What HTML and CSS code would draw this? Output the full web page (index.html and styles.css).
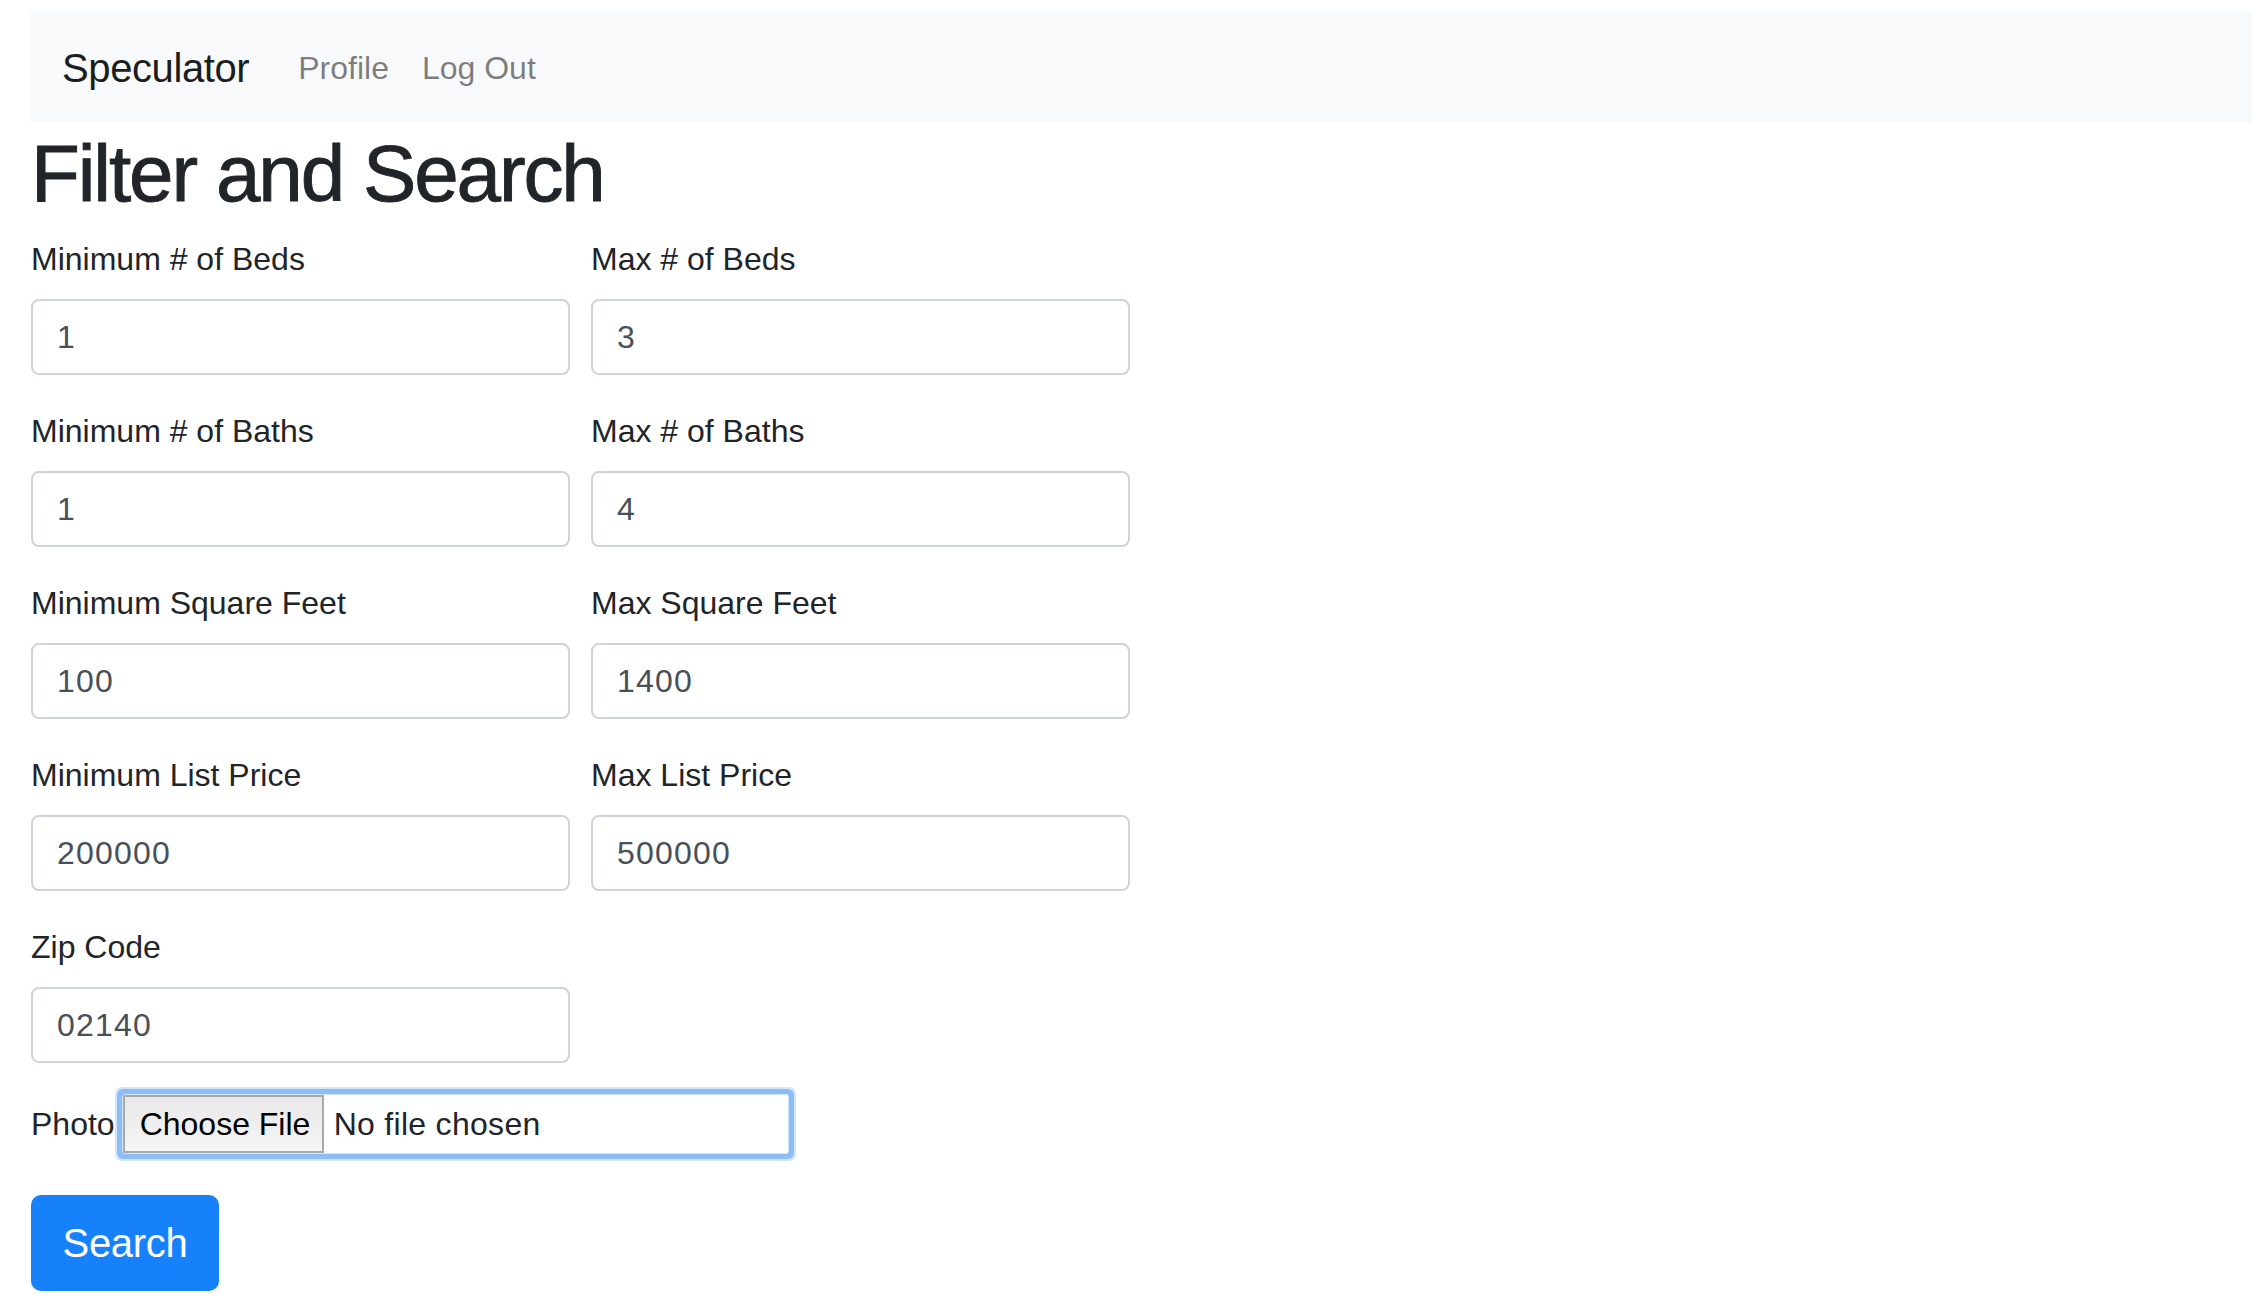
FILE: index.html
```html
<!DOCTYPE html>
<html lang="en">
<head>
<meta charset="utf-8">
<title>Speculator - Filter and Search</title>
<link rel="stylesheet" href="styles.css">
</head>
<body>
<div class="page">
  <nav class="navbar">
    <a class="brand" href="#">Speculator</a>
    <a class="nav-link" href="#">Profile</a>
    <a class="nav-link" href="#">Log Out</a>
  </nav>
  <h1 class="title">Filter and Search</h1>
  <form class="search-form">
    <div class="form-grid">
      <div class="field"><label>Minimum # of Beds</label><input class="input" type="text" value="1"></div>
      <div class="field"><label>Max # of Beds</label><input class="input" type="text" value="3"></div>
      <div class="field"><label>Minimum # of Baths</label><input class="input" type="text" value="1"></div>
      <div class="field"><label>Max # of Baths</label><input class="input" type="text" value="4"></div>
      <div class="field"><label>Minimum Square Feet</label><input class="input" type="text" value="100"></div>
      <div class="field"><label>Max Square Feet</label><input class="input" type="text" value="1400"></div>
      <div class="field"><label>Minimum List Price</label><input class="input" type="text" value="200000"></div>
      <div class="field"><label>Max List Price</label><input class="input" type="text" value="500000"></div>
      <div class="field"><label>Zip Code</label><input class="input" type="text" value="02140"></div>
    </div>
    <div class="photo-row">
      <span class="photo-label">Photo</span>
      <div class="file-box">
        <span class="file-btn">Choose File</span>
        <span class="file-name">No file chosen</span>
      </div>
    </div>
    <button class="btn-search" type="button">Search</button>
  </form>
</div>
</body>
</html>
```
FILE: styles.css
```css
* { box-sizing: border-box; }

html, body {
  margin: 0;
  padding: 0;
  background: #ffffff;
}

body {
  font-family: "Liberation Sans", Arial, Helvetica, sans-serif;
  color: #212529;
}

.page {
  padding: 11px 11px 0 31px;
}

.navbar {
  display: flex;
  align-items: center;
  height: 112px;
  padding: 0 32px 0 31px;
  background: #f8f9fa;
}

.brand {
  font-size: 40px;
  line-height: 60px;
  letter-spacing: -0.4px;
  color: #1b1e21;
  text-decoration: none;
  margin-right: 33px;
  margin-top: 2px;
}

.nav-link {
  font-size: 32px;
  line-height: 48px;
  padding: 0 16px;
  color: rgba(0, 0, 0, 0.5);
  text-decoration: none;
  margin-top: 2px;
}

.nav-link + .nav-link {
  margin-left: 1px;
}

.title {
  margin: 3px 0 13px;
  font-size: 80px;
  line-height: 96px;
  font-weight: 400;
  letter-spacing: -2.15px;
  color: #212529;
  -webkit-text-stroke: 0.9px #212529;
}

.search-form {
  margin: 0;
}

.form-grid {
  display: grid;
  grid-template-columns: 539px 539px;
  column-gap: 21px;
  row-gap: 32px;
}

.field {
  display: flex;
  flex-direction: column;
}

.field label {
  font-size: 32px;
  line-height: 48px;
  margin-bottom: 16px;
  color: #212529;
}

.input {
  display: block;
  width: 100%;
  height: 76px;
  padding: 0 22px 0 24px;
  font-family: "Liberation Sans", Arial, Helvetica, sans-serif;
  font-size: 32px;
  letter-spacing: 1.2px;
  color: #495057;
  background: #ffffff;
  border: 2px solid #ced4da;
  border-radius: 8px;
  outline: none;
}

.photo-row {
  display: flex;
  align-items: center;
  margin-top: 32px;
  height: 58px;
}

.photo-label {
  font-size: 32px;
  color: #212529;
  margin-right: 8px;
}

.file-box {
  display: flex;
  align-items: stretch;
  width: 665px;
  height: 58px;
  background: #ffffff;
  border-radius: 2px;
  box-shadow: 0 0 0 1px #d2e4fb, 0 0 0 6px #8bbdf7, 0 0 0 8px #d4e6fc;
}

.file-btn {
  display: flex;
  align-items: center;
  width: 201px;
  padding: 0 0 0 15px;
  font-size: 32px;
  color: #000000;
  border: 2px solid #a9a9a9;
  background: linear-gradient(#e8e8e8, #f5f5f5);
}

.file-name {
  display: flex;
  align-items: center;
  padding-left: 10px;
  font-size: 32px;
  letter-spacing: 0.3px;
  color: #212529;
}

.btn-search {
  display: block;
  margin-top: 42px;
  width: 188px;
  height: 96px;
  padding: 0;
  font-family: "Liberation Sans", Arial, Helvetica, sans-serif;
  font-size: 40px;
  letter-spacing: -0.3px;
  color: #ffffff;
  background: #1781fb;
  border: 2px solid #1781fb;
  border-radius: 10px;
  cursor: pointer;
}
```
